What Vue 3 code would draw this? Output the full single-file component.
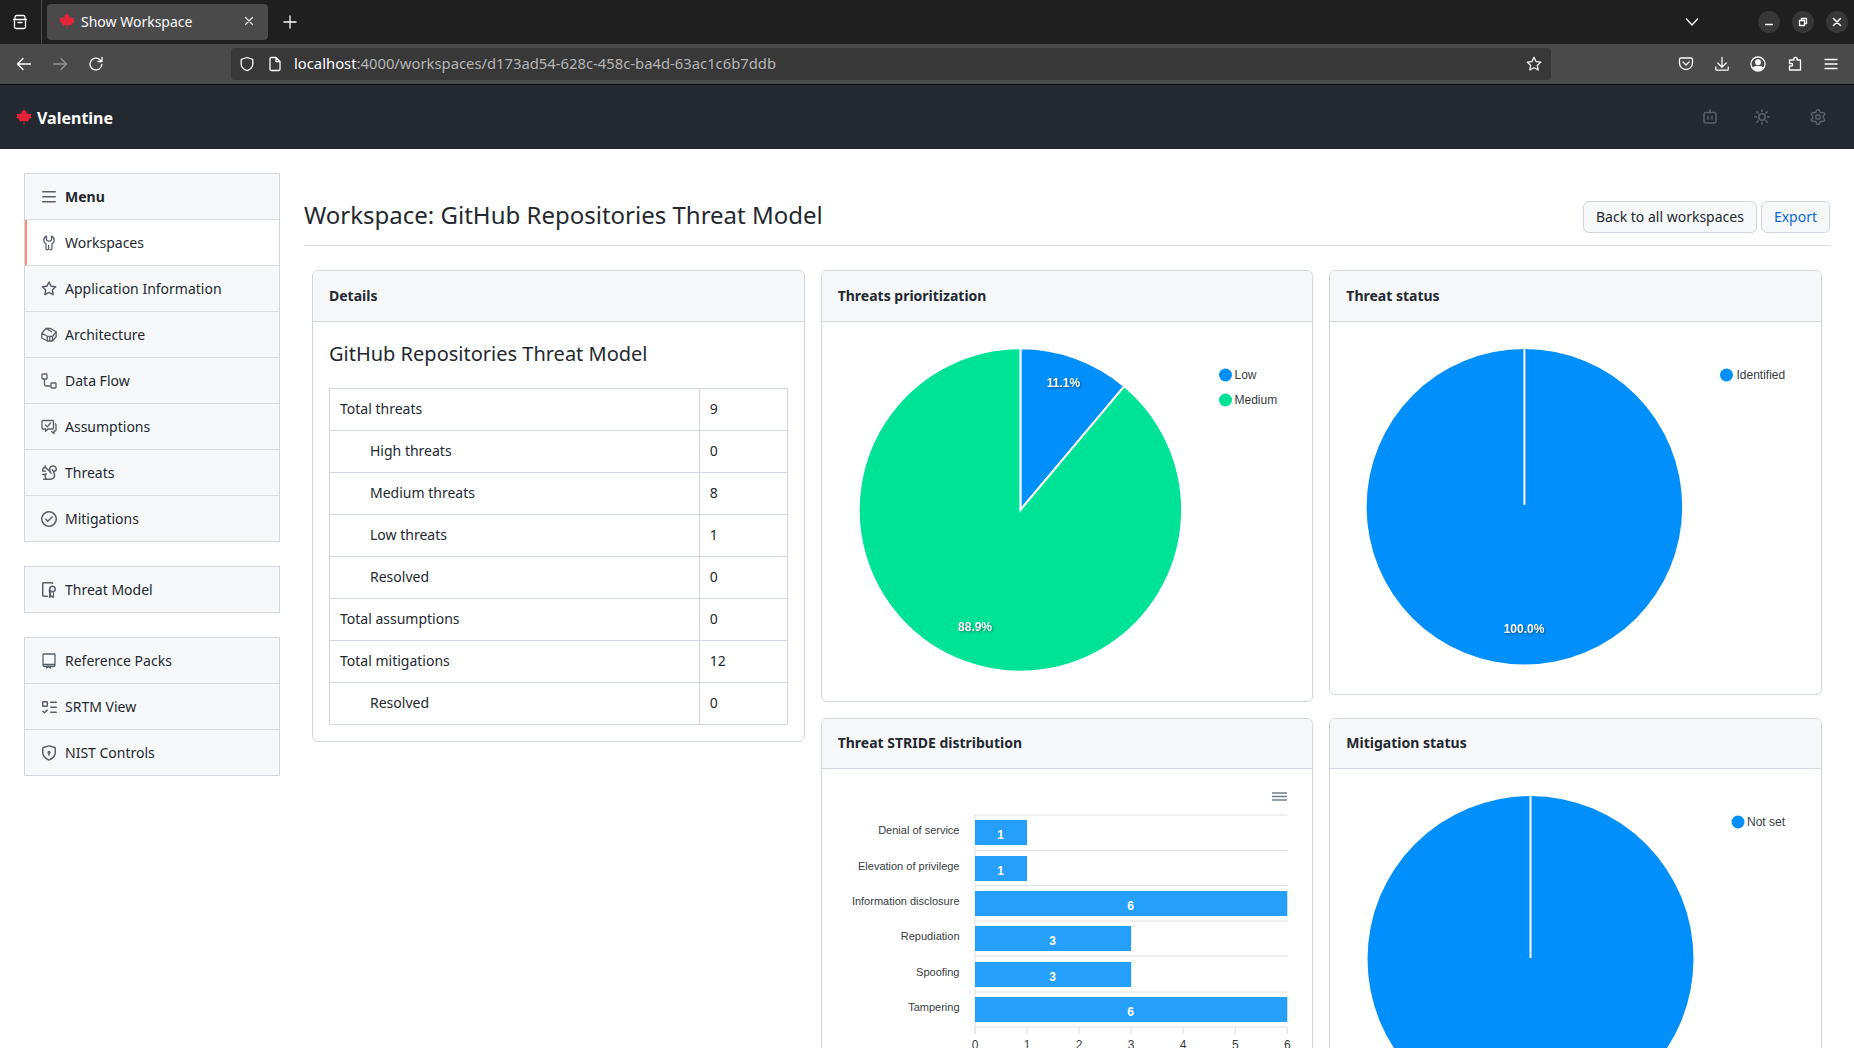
<template>
  <div class="page">
    <!-- browser chrome -->
    <div class="tabbar">
      <div class="tabside">
        <svg class="ff" width="16" height="16" viewBox="0 0 16 16"><path d="M2.5 5.5V13a1.5 1.5 0 0 0 1.5 1.5h8a1.5 1.5 0 0 0 1.5-1.5V5.5M1.5 5.5h13M3 5.5V3.2A1.7 1.7 0 0 1 4.7 1.5h6.6A1.7 1.7 0 0 1 13 3.2v2.3M6 8.5h4" /></svg>
      </div>
      <div class="tab">
        <svg class="leaf" width="16" height="16" viewBox="0 0 16 16"><path :d="leaf" /></svg>
        <span class="tabtitle">Show Workspace</span>
        <svg class="ff tabclose" width="12" height="12" viewBox="0 0 12 12"><path d="M2.5 2.5l7 7M9.5 2.5l-7 7" /></svg>
      </div>
      <svg class="ff newtab" width="16" height="16" viewBox="0 0 16 16"><path d="M8 2v12M2 8h12" /></svg>
      <svg class="ff chevron" width="16" height="16" viewBox="0 0 16 16"><path d="M2.5 5l5.5 6 5.5-6" /></svg>
      <div class="winbtns">
        <span class="winbtn"><svg class="ff" width="12" height="12" viewBox="0 0 12 12"><path d="M2.5 8.5h7" /></svg></span>
        <span class="winbtn"><svg class="ff" width="12" height="12" viewBox="0 0 12 12"><path d="M2.5 4.5h5v5h-5zM4.5 4.5v-2h5v5h-2" /></svg></span>
        <span class="winbtn"><svg class="ff" width="12" height="12" viewBox="0 0 12 12"><path d="M2.5 2.5l7 7M9.5 2.5l-7 7" stroke-width="1.5" /></svg></span>
      </div>
    </div>
    <div class="toolbar">
      <svg class="ff navbtn" width="16" height="16" viewBox="0 0 16 16"><path d="M14.5 8h-13M7 2.5L1.5 8 7 13.5" /></svg>
      <svg class="ff navbtn dim" width="16" height="16" viewBox="0 0 16 16"><path d="M1.5 8h13M9 2.5L14.5 8 9 13.5" /></svg>
      <svg class="ff navbtn" width="16" height="16" viewBox="0 0 16 16"><path d="M13.8 8.5A5.9 5.9 0 1 1 12 3.8L14 5.5M14 1.5v4h-4" /></svg>
      <div class="urlbar">
        <svg class="ff" width="16" height="16" viewBox="0 0 16 16"><path d="M8 1.5l5.8 1.8V8c0 3-2.3 5.4-5.8 6.7C4.5 13.4 2.2 11 2.2 8V3.3z" /></svg>
        <svg class="ff" width="16" height="16" viewBox="0 0 16 16"><path d="M3 2.8A1.3 1.3 0 0 1 4.3 1.5H9L13 5.5v7.7a1.3 1.3 0 0 1-1.3 1.3H4.3A1.3 1.3 0 0 1 3 13.2zM9 1.5v4h4" /></svg>
        <span class="url"><span class="host">localhost</span>:4000/workspaces/d173ad54-628c-458c-ba4d-63ac1c6b7ddb</span>
        <svg class="ff star" width="16" height="16" viewBox="0 0 16 16"><path d="M8 1.3l2 4.3 4.7.6-3.4 3.2.9 4.6L8 11.7 3.8 14l.9-4.6L1.3 6.2 6 5.6z" /></svg>
      </div>
      <div class="tools">
        <svg class="ff" width="16" height="16" viewBox="0 0 16 16"><path d="M2.8 2h10.4a1.3 1.3 0 0 1 1.3 1.3V7A6.5 6.5 0 0 1 1.5 7V3.3A1.3 1.3 0 0 1 2.8 2zM5 6l3 3 3-3" /></svg>
        <svg class="ff" width="16" height="16" viewBox="0 0 16 16"><path d="M8 1.5V11M3.8 7L8 11.2 12.2 7M1.8 11v2.2a1 1 0 0 0 1 1h10.4a1 1 0 0 0 1-1V11" /></svg>
        <svg class="ff" width="16" height="16" viewBox="0 0 16 16"><circle cx="8" cy="8" r="7" /><circle cx="8" cy="6.3" r="2.3" fill="#fbfbfe" /><path d="M3.5 11.8c1-1.5 8-1.5 9 0-1.2 1.5-2.8 2.2-4.5 2.2s-3.3-.7-4.5-2.2z" fill="#fbfbfe" /></svg>
        <svg class="ff" width="16" height="16" viewBox="0 0 16 16"><path d="M8.5 1.5c1.5 0 2 1 1.5 2.5h3.5v10H2.5v-4h2c1.5 0 1.5-2.5 0-2.5h-2V4H7c-.5-1.5 0-2.500 1.500-2.500z" /></svg>
        <svg class="ff" width="16" height="16" viewBox="0 0 16 16"><path d="M2 3.5h12M2 8h12M2 12.5h12" /></svg>
      </div>
    </div>

    <!-- app header -->
    <header class="appbar">
      <svg class="leaf" width="16" height="16" viewBox="0 0 16 16"><path :d="leaf" /></svg>
      <span class="brand">Valentine</span>
      <div class="appicons">
        <svg class="oct" width="16" height="16" viewBox="0 0 16 16"><path d="M8 3V.8M3.5 3.500h9a1.500 1.500 0 0 1 1.500 1.500v7.500a1.500 1.500 0 0 1-1.500 1.500h-9A1.500 1.500 0 0 1 2 12.500V5a1.500 1.500 0 0 1 1.500-1.500zM6 7.500v2.500M10 7.500v2.500" fill="none" stroke="#57606a" stroke-width="1.5" stroke-linecap="round" /></svg>
        <svg class="oct sun" width="16" height="16" viewBox="0 0 16 16"><circle cx="8" cy="8" r="3.2" fill="none" stroke="#57606a" stroke-width="1.5" /><path d="M8 .8v1.700M8 13.500v1.700M.8 8h1.700M13.500 8h1.700M2.900 2.900l1.200 1.200M11.900 11.900l1.200 1.200M2.900 13.100l1.200-1.200M11.900 4.100l1.200-1.200" stroke="#57606a" stroke-width="1.5" stroke-linecap="round" /></svg>
        <svg class="oct" width="16" height="16" viewBox="0 0 16 16"><path :d="icons.gear" fill="#57606a" fill-rule="evenodd" /></svg>
      </div>
    </header>

    <div class="layout">
      <aside class="sidebar">
        <nav class="menu" v-for="(group, i) in navGroups" :key="i">
          <a v-for="item in group" :key="item.label" class="menu-item" :class="{ head: item.head, active: item.active }">
            <svg class="oct" width="16" height="16" viewBox="0 0 16 16">
              <path v-if="item.fill" :d="item.fill" fill="#57606a" fill-rule="evenodd" />
              <path v-if="item.line" :d="item.line" fill="none" stroke="#57606a" stroke-width="1.3" stroke-linecap="round" stroke-linejoin="round" />
            </svg>
            <span>{{ item.label }}</span>
          </a>
        </nav>
      </aside>

      <main class="main">
        <div class="pagehead">
          <h1>Workspace: GitHub Repositories Threat Model</h1>
          <div class="actions">
            <button class="btn">Back to all workspaces</button>
            <button class="btn link">Export</button>
          </div>
        </div>

        <div class="grid">
          <section class="box details">
            <div class="box-head">Details</div>
            <div class="box-body">
              <h3>GitHub Repositories Threat Model</h3>
              <table>
                <tbody>
                  <tr v-for="row in stats" :key="row.label + row.value">
                    <td :class="{ sub: row.sub }">{{ row.label }}</td>
                    <td class="num">{{ row.value }}</td>
                  </tr>
                </tbody>
              </table>
            </div>
          </section>

          <section class="box">
            <div class="box-head">Threats prioritization</div>
            <svg class="chart" height="379">
              <path :d="slice(198.4, 188, 161.7, 40)" fill="#008ffb" stroke="#fff" stroke-width="2" />
              <path :d="slice(198.4, 188, 161.7, 360, 40)" fill="#00e396" stroke="#fff" stroke-width="2" />
              <text class="pct" x="241.5" y="65">11.1%</text>
              <text class="pct" x="153" y="309">88.9%</text>
              <circle cx="403.5" cy="53" r="6.5" fill="#008ffb" />
              <text class="legend" x="412.5" y="57">Low</text>
              <circle cx="403.5" cy="78" r="6.5" fill="#00e396" />
              <text class="legend" x="412.5" y="82">Medium</text>
            </svg>
          </section>

          <section class="box">
            <div class="box-head">Threat status</div>
            <svg class="chart" height="372">
              <circle cx="194.4" cy="184.8" r="157.8" fill="#008ffb" />
              <path d="M194.4 26V183" stroke="#fff" stroke-width="2" />
              <text class="pct" x="194" y="311">100.0%</text>
              <circle cx="396.5" cy="53" r="6.5" fill="#008ffb" />
              <text class="legend" x="406.5" y="57">Identified</text>
            </svg>
          </section>

          <section class="box second">
            <div class="box-head">Threat STRIDE distribution</div>
            <svg class="chart" height="340">
              <path d="M450 24h15M450 27.5h15M450 31h15" stroke="#6e8192" stroke-width="1.5" />
              <path v-for="y in gridY" :key="y" :d="`M153 ${y}H465.5`" stroke="#e0e0e0" />
              <path d="M153 46V265" stroke="#e0e0e0" />
              <path v-for="t in 7" :key="t" :d="`M${tickX(t - 1)} 258v7`" stroke="#e0e0e0" />
              <g v-for="bar in bars" :key="bar.label">
                <text class="axis" x="137.5" text-anchor="end" :y="bar.y + 14">{{ bar.label }}</text>
                <rect x="153" :y="bar.y" :width="bar.value * 52.05" height="25" fill="#269ffb" />
                <text class="barval" :x="152.5 + bar.value * 26.02" :y="bar.y + 19">{{ bar.value }}</text>
              </g>
              <text v-for="t in 7" :key="t" class="tick" :x="tickX(t - 1)" y="280">{{ t - 1 }}</text>
            </svg>
          </section>

          <section class="box second">
            <div class="box-head">Mitigation status</div>
            <svg class="chart" height="400">
              <circle cx="200.5" cy="190" r="163" fill="#008ffb" />
              <path d="M200.5 27V189" stroke="#fff" stroke-width="2" />
              <circle cx="408" cy="53" r="6.5" fill="#008ffb" />
              <text class="legend" x="417" y="57">Not set</text>
            </svg>
          </section>
        </div>
      </main>
    </div>
  </div>
</template>

<script setup>
const leaf = 'M8 0L9.5 2.8L10.8 2.1L10.2 5.6L12 3.8L12.5 5.2L15.5 4.8L14.6 7.6L15.8 8.3L12.2 11L12.7 12.4L8.4 12V16H7.6V12L3.3 12.4L3.8 11L.2 8.3L1.4 7.6L.5 4.8L3.5 5.2L4 3.8L5.8 5.6L5.2 2.1L6.5 2.8Z'

const icons = {
  gear: 'M8 0a8.2 8.2 0 0 1 .701.031C9.444.095 9.99.645 10.16 1.29l.288 1.107c.018.066.079.158.212.224.231.114.454.243.668.386.123.082.233.09.299.071l1.103-.303c.644-.176 1.392.021 1.82.63.27.385.506.792.704 1.218.315.675.111 1.422-.364 1.891l-.814.806c-.049.048-.098.147-.088.294.016.257.016.515 0 .772-.01.147.038.246.088.294l.814.806c.475.469.679 1.216.364 1.891a7.977 7.977 0 0 1-.704 1.217c-.428.61-1.176.807-1.82.63l-1.102-.302c-.067-.019-.177-.011-.3.071a5.909 5.909 0 0 1-.668.386c-.133.066-.194.158-.211.224l-.29 1.106c-.168.646-.715 1.196-1.458 1.26a8.006 8.006 0 0 1-1.402 0c-.743-.064-1.289-.614-1.458-1.26l-.289-1.106c-.018-.066-.079-.158-.212-.224a5.738 5.738 0 0 1-.668-.386c-.123-.082-.233-.09-.299-.071l-1.103.303c-.644.176-1.392-.021-1.82-.63a8.12 8.12 0 0 1-.704-1.218c-.315-.675-.111-1.422.363-1.891l.815-.806c.05-.048.098-.147.088-.294a6.214 6.214 0 0 1 0-.772c.01-.147-.038-.246-.088-.294l-.815-.806C.635 6.045.431 5.298.746 4.623a7.92 7.92 0 0 1 .704-1.217c.428-.61 1.176-.807 1.82-.63l1.102.302c.067.019.177.011.3-.071.214-.143.437-.272.668-.386.133-.066.194-.158.211-.224l.29-1.106C6.009.645 6.556.095 7.299.03 7.53.01 7.764 0 8 0Zm-.571 1.525c-.036.003-.108.036-.137.146l-.289 1.105c-.147.561-.549.967-.998 1.189-.173.086-.34.183-.5.29-.417.278-.97.423-1.529.27l-1.103-.303c-.109-.03-.175.016-.195.045-.22.312-.412.644-.573.99-.014.031-.021.11.059.19l.815.806c.411.406.562.957.53 1.456a4.709 4.709 0 0 0 0 .582c.032.499-.119 1.05-.53 1.456l-.815.806c-.081.08-.073.159-.059.19.162.346.353.677.573.989.02.03.085.076.195.046l1.102-.303c.56-.153 1.113-.008 1.53.27.161.107.328.204.501.29.447.222.85.629.997 1.189l.289 1.105c.029.109.101.143.137.146a6.6 6.6 0 0 0 1.142 0c.036-.003.108-.036.137-.146l.289-1.105c.147-.561.549-.967.998-1.189.173-.086.34-.183.5-.29.417-.278.97-.423 1.529-.27l1.103.303c.109.029.175-.016.195-.045.22-.313.411-.644.573-.99.014-.031.021-.11-.059-.19l-.815-.806c-.411-.406-.562-.957-.53-1.456a4.709 4.709 0 0 0 0-.582c-.032-.499.119-1.05.53-1.456l.815-.806c.081-.08.073-.159.059-.19a6.464 6.464 0 0 0-.573-.989c-.02-.03-.085-.076-.195-.046l-1.102.303c-.56.153-1.113.008-1.53-.27a4.44 4.44 0 0 0-.501-.29c-.447-.222-.85-.629-.997-1.189l-.289-1.105c-.029-.11-.101-.143-.137-.146a6.6 6.6 0 0 0-1.142 0ZM11 8a3 3 0 1 1-6 0 3 3 0 0 1 6 0ZM9.500 8a1.500 1.500 0 1 0-3.001.001A1.500 1.500 0 0 0 9.500 8Z'
}

const navGroups = [
  [
    { label: 'Menu', head: true, fill: 'M1 2.750A.75.75 0 0 1 1.750 2h12.500a.75.75 0 0 1 0 1.500H1.750A.75.75 0 0 1 1 2.750Zm0 5A.75.75 0 0 1 1.750 7h12.500a.75.75 0 0 1 0 1.500H1.750A.75.75 0 0 1 1 7.750ZM1.750 12h12.500a.75.75 0 0 1 0 1.500H1.750a.75.75 0 0 1 0-1.500Z' },
    { label: 'Workspaces', active: true, line: 'M5.500 1.200C3.800 2 2.800 3.400 2.800 5.200c0 1.500.8 2.700 2.200 3.300V13.500a1.300 1.300 0 0 0 2.600 0V10.500M10.500 1.200C12.200 2 13.200 3.400 13.200 5.200c0 1.500-.8 2.700-2.200 3.300V13.500a1.300 1.300 0 0 1-2 1M5.500 1.200V4.800c.6 1 1.500 1.400 2.500 1.400s1.900-.4 2.500-1.400V1.200' },
    { label: 'Application Information', fill: 'M8 .25a.75.75 0 0 1 .673.418l1.882 3.815 4.21.612a.75.75 0 0 1 .416 1.279l-3.046 2.97.719 4.192a.751.751 0 0 1-1.088.791L8 12.347l-3.766 1.98a.75.75 0 0 1-1.088-.79l.72-4.194L.818 6.374a.75.75 0 0 1 .416-1.28l4.21-.611L7.327.668A.75.75 0 0 1 8 .25Zm0 2.445L6.615 5.500a.75.75 0 0 1-.564.41l-3.097.45 2.240 2.184a.75.75 0 0 1 .216.664l-.528 3.084 2.769-1.456a.75.75 0 0 1 .698 0l2.770 1.456-.53-3.084a.75.75 0 0 1 .216-.664l2.240-2.183-3.096-.45a.75.75 0 0 1-.564-.41L8 2.694Z' },
    { label: 'Architecture', line: 'M.8 6.200L5 1.500h4.500L15.200 4.700v4.800L11.500 14H6.300L.8 11zM.8 6.200L6.300 9.300h5.200l3.700-4.600M6.300 9.300V14M8.800 9.300V14M11.500 9.300V14M5 1.500l5.500 3.200' },
    { label: 'Data Flow', line: 'M1.700 1h3.600a.7.7 0 0 1 .7.7v3.600a.7.7 0 0 1-.7.7H1.700a.7.7 0 0 1-.7-.7V1.700a.7.7 0 0 1 .7-.7zM10.700 10h3.600a.7.7 0 0 1 .7.7v3.600a.7.7 0 0 1-.7.7h-3.600a.7.7 0 0 1-.7-.7v-3.600a.7.7 0 0 1 .7-.7zM3.500 6v5.500a1.500 1.500 0 0 0 1.500 1.500h5' },
    { label: 'Assumptions', line: 'M2 1.500h9.500A1 1 0 0 1 12.500 2.500v6.500a1 1 0 0 1-1 1H7l-2.500 2.300V10H2a1 1 0 0 1-1-1V2.500a1 1 0 0 1 1-1zM4.500 6l1.800 1.800L9.500 4M14.300 4.800c.4.200.7.600.7 1V11a1 1 0 0 1-1 1h-1v2.500L10.500 12.500' },
    { label: 'Threats', fill: 'M3.499.75a.75.75 0 0 1 1.5 0v.996C5.9 2.903 6.793 3.65 7.662 4.376l.24.202c-.036-.694.055-1.422.426-2.163C9.100.873 10.794-.045 12.622.26 14.408.558 16 1.940 16 4.250c0 1.278-.954 2.575-2.440 2.734l.146.508.065.22c.203.701.412 1.455.476 2.226.142 1.707-.4 3.030-1.487 3.898C11.714 14.671 10.270 15 8.750 15h-6a.75.75 0 0 1 0-1.500h1.376a4.484 4.484 0 0 1-.563-1.191 3.835 3.835 0 0 1-.05-2.063 4.647 4.647 0 0 1-2.025-.293.75.75 0 0 1 .525-1.406c1.357.507 2.376-.006 2.698-.318l.009-.01a.747.747 0 0 1 1.060 0 .748.748 0 0 1-.012 1.074c-.912.92-.992 1.835-.768 2.586.221.74.745 1.337 1.196 1.621H8.750c1.343 0 2.398-.296 3.074-.836.635-.507 1.036-1.310.928-2.602-.05-.603-.216-1.224-.422-1.930l-.064-.221c-.12-.407-.246-.84-.353-1.290a2.425 2.425 0 0 1-.507-.441 3.075 3.075 0 0 1-.633-1.248.75.75 0 0 1 1.455-.364c.046.185.144.436.31.627.146.168.353.305.712.305.738 0 1.250-.615 1.250-1.250 0-1.470-.95-2.315-2.123-2.510-1.172-.196-2.227.387-2.706 1.345-.46.92-.27 1.774.019 3.062l.042.19a.753.753 0 0 1 .01.05c.348.443.666.949.94 1.553a.75.75 0 1 1-1.365.62c-.553-1.217-1.320-1.940-2.300-2.768L6.700 5.527c-.814-.68-1.750-1.462-2.692-2.619a3.737 3.737 0 0 0-1.023.88c-.406.495-.663 1.036-.722 1.508.116.122.306.21.591.239.388.038.797-.06 1.032-.19a.75.75 0 0 1 .728 1.310c-.515.287-1.230.439-1.906.373-.682-.067-1.473-.38-1.879-1.193L.75 5.677V5.500c0-.984.48-1.940 1.077-2.664.46-.559 1.050-1.055 1.673-1.353V.75Z' },
    { label: 'Mitigations', fill: 'M0 8a8 8 0 1 1 16 0A8 8 0 0 1 0 8Zm1.500 0a6.500 6.500 0 1 0 13 0 6.500 6.500 0 0 0-13 0Zm10.280-1.720-4.500 4.500a.75.75 0 0 1-1.060 0l-2-2a.751.751 0 0 1 .018-1.042.751.751 0 0 1 1.042-.018l1.470 1.470 3.970-3.970a.751.751 0 0 1 1.042.018.751.751 0 0 1 .018 1.042Z' }
  ],
  [
    { label: 'Threat Model', fill: 'M2.750 1.500a.25.25 0 0 0-.25.25v11.500c0 .138.112.25.25.25h3.500a.75.75 0 0 1 0 1.500h-3.500A1.750 1.750 0 0 1 1 13.250V1.750C1 .784 1.784 0 2.750 0h8a1.750 1.750 0 0 1 1.508.862.75.75 0 1 1-1.289.768.25.25 0 0 0-.219-.13h-8ZM8 7a3.500 3.500 0 1 1 5 3.163V15.250a.75.75 0 0 1-1.200.6l-1.300-.975-1.300.975a.75.75 0 0 1-1.200-.6v-5.087A3.500 3.500 0 0 1 8 7Zm3.500-2a2 2 0 1 0 0 4 2 2 0 0 0 0-4ZM10 10.500v3.250l.55-.412a.75.75 0 0 1 .9 0l.55.412V10.500c-.48.157-1.020.157-1.500 0Z' },
  ],
  [
    { label: 'Reference Packs', line: 'M4.500 13.500H3.500A1.500 1.500 0 0 1 2 12V1.700A.7.7 0 0 1 2.700 1h10.600a.7.7 0 0 1 .7.7V12a1.500 1.500 0 0 1-1.500 1.500H10.500M2 11.500h12', fill: 'M5 12.500h5v3a.25.25 0 0 1-.4.2L7.500 14.500 5.400 15.700a.25.25 0 0 1-.4-.2z' },
    { label: 'SRTM View', fill: 'M2 2h4a1 1 0 0 1 1 1v4a1 1 0 0 1-1 1H2a1 1 0 0 1-1-1V3a1 1 0 0 1 1-1Zm4.655 8.595a.75.75 0 0 1 0 1.060L4.030 14.280a.75.75 0 0 1-1.060 0l-1.500-1.500a.749.749 0 0 1 .326-1.275.749.749 0 0 1 .734.215l.97.97 2.095-2.095a.75.75 0 0 1 1.060 0ZM9.750 2.500h5.500a.75.75 0 0 1 0 1.500h-5.500a.75.75 0 0 1 0-1.500Zm0 5h5.500a.75.75 0 0 1 0 1.500h-5.500a.75.75 0 0 1 0-1.500Zm0 5h5.500a.75.75 0 0 1 0 1.500h-5.500a.75.75 0 0 1 0-1.500Zm-7.250-9v3h3v-3Z' },
    { label: 'NIST Controls', fill: 'M7.467.133a1.748 1.748 0 0 1 1.066 0l5.250 1.680A1.750 1.750 0 0 1 15 3.480V7c0 1.566-.32 3.182-1.303 4.682-.983 1.498-2.585 2.813-5.032 3.855a1.697 1.697 0 0 1-1.330 0c-2.447-1.042-4.049-2.357-5.032-3.855C1.320 10.182 1 8.566 1 7V3.480a1.750 1.750 0 0 1 1.217-1.667Zm.61 1.429a.25.25 0 0 0-.153 0l-5.250 1.680a.25.25 0 0 0-.174.238V7c0 1.358.275 2.666 1.057 3.860.784 1.194 2.121 2.340 4.366 3.297a.196.196 0 0 0 .154 0c2.245-.956 3.582-2.104 4.366-3.298C13.225 9.666 13.500 8.360 13.500 7V3.480a.251.251 0 0 0-.174-.237l-5.250-1.680ZM8.750 8.582v1.668a.75.75 0 0 1-1.500 0V8.582a1.500 1.500 0 1 1 1.500 0Z' }
  ]
]

const stats = [
  { label: 'Total threats', value: 9 },
  { label: 'High threats', value: 0, sub: true },
  { label: 'Medium threats', value: 8, sub: true },
  { label: 'Low threats', value: 1, sub: true },
  { label: 'Resolved', value: 0, sub: true },
  { label: 'Total assumptions', value: 0 },
  { label: 'Total mitigations', value: 12 },
  { label: 'Resolved', value: 0, sub: true }
]

const gridY = [46, 81.5, 116.5, 152, 187, 223, 258]
const bars = [
  { label: 'Denial of service', value: 1, y: 51 },
  { label: 'Elevation of privilege', value: 1, y: 87 },
  { label: 'Information disclosure', value: 6, y: 122 },
  { label: 'Repudiation', value: 3, y: 157 },
  { label: 'Spoofing', value: 3, y: 193 },
  { label: 'Tampering', value: 6, y: 228 }
]

function tickX(n) {
  return 153 + n * 52.05
}

// pie wedge clockwise from the top, angles in degrees
function slice(cx, cy, r, to, from = 0) {
  const point = (deg) => {
    const a = (deg * Math.PI) / 180
    return `${cx + r * Math.sin(a)} ${cy - r * Math.cos(a)}`
  }
  const large = to - from > 180 ? 1 : 0
  return `M${cx} ${cy}L${point(from)}A${r} ${r} 0 ${large} 1 ${point(to)}Z`
}
</script>

<style>
html, body {
  margin: 0;
  height: 1048px;
  overflow: hidden;
  background: #fff;
}
</style>

<style scoped>
.page {
  width: 1854px;
  height: 1048px;
  overflow: hidden;
  font-family: "Noto Sans", "Liberation Sans", sans-serif;
  font-size: 14px;
  line-height: 21px;
  color: #24292f;
}

.ff {
  fill: none;
  stroke: #fbfbfe;
  stroke-width: 1.3;
  stroke-linecap: round;
  stroke-linejoin: round;
  flex: none;
}
.leaf {
  fill: #e5243b;
  flex: none;
}

.tabbar {
  height: 44px;
  background: #1f1f1f;
  display: flex;
  align-items: center;
}
.tabside {
  width: 42px;
  height: 44px;
  border-right: 1px solid #4a4a4a;
  box-sizing: border-box;
  display: flex;
  align-items: center;
  padding-left: 12px;
}
.tab {
  margin-left: 5px;
  width: 221px;
  height: 36px;
  box-sizing: border-box;
  padding: 0 12px 2px;
  background: #4a4a4a;
  border-radius: 4px;
  display: flex;
  align-items: center;
  color: #fbfbfe;
}
.tabtitle {
  margin-left: 6px;
  font-size: 14px;
  flex: 1;
}
.tabclose {
  margin-right: 1px;
  stroke: #e8e8e8;
}
.newtab {
  margin-left: 14px;
}
.chevron {
  margin-left: auto;
  margin-right: 58px;
}
.winbtns {
  display: flex;
  gap: 12px;
  margin-right: 6px;
}
.winbtn {
  width: 22px;
  height: 22px;
  border-radius: 50%;
  background: #373737;
  display: flex;
  align-items: center;
  justify-content: center;
}

.toolbar {
  height: 40px;
  background: #4a4a4a;
  border-bottom: 1px solid #0c0c0c;
  display: flex;
  align-items: center;
  padding-left: 16px;
}
.navbtn {
  margin-right: 20px;
}
.navbtn.dim {
  opacity: 0.4;
}
.urlbar {
  margin-left: 107px;
  width: 1320px;
  height: 32px;
  box-sizing: border-box;
  background: #383838;
  border-radius: 4px;
  display: flex;
  align-items: center;
  gap: 12px;
  padding: 0 9px 0 8px;
  color: #b4b4b4;
}
.url {
  font-size: 14.8px;
  flex: 1;
  margin-left: -1px;
  padding-bottom: 2px;
  white-space: nowrap;
}
.host {
  color: #fbfbfe;
}
.tools {
  display: flex;
  align-items: center;
  gap: 20.2px;
  margin-left: 127px;
}

.appbar {
  height: 64px;
  background: #24292f;
  display: flex;
  align-items: center;
  padding-left: 16px;
}
.brand {
  margin-left: 5px;
  padding-top: 2px;
  color: #fff;
  font-weight: 700;
  font-size: 16px;
}
.appicons {
  margin-left: auto;
  display: flex;
  padding-right: 28px;
  margin-bottom: 1px;
}
.sun {
  margin: 0 40px 0 36px;
}

.layout {
  display: flex;
  padding: 24px 24px 0;
  gap: 24px;
}
.sidebar {
  width: 256px;
  flex: none;
  display: flex;
  flex-direction: column;
  gap: 24px;
}
.menu {
  border: 1px solid #d0d7de;
  background: #f6f8fa;
  display: flex;
  flex-direction: column;
}
.menu-item {
  height: 46px;
  box-sizing: border-box;
  display: flex;
  align-items: center;
  gap: 8px;
  padding-left: 16px;
  border-bottom: 1px solid #d8dee4;
}
.menu-item:last-child {
  border-bottom: none;
  height: 45px;
}
.menu-item .oct {
  flex: none;
}
.menu-item.head {
  font-weight: 700;
}
.menu-item.active {
  background: #fff;
  box-shadow: inset 2px 0 0 #fd8c73;
}

.main {
  flex: 1;
  min-width: 0;
  padding-top: 28px;
}
.pagehead {
  display: flex;
  align-items: flex-start;
  justify-content: space-between;
  padding-bottom: 12px;
  border-bottom: 1px solid #d8dee4;
}
h1 {
  margin: 0;
  font-size: 24px;
  font-weight: 400;
  line-height: 28px;
}
.actions {
  display: flex;
  gap: 4px;
}
.btn {
  height: 32px;
  padding: 0 12px 2px;
  font: inherit;
  color: #24292f;
  background: #f6f8fa;
  border: 1px solid #d0d7de;
  border-radius: 6px;
}
.btn.link {
  color: #0969da;
}

.grid {
  display: grid;
  grid-template-columns: repeat(3, 1fr);
  gap: 16px;
  padding: 24px 8px 0;
  align-items: start;
}
.details {
  grid-row: span 2;
}
.box {
  border: 1px solid #d0d7de;
  border-radius: 6px;
  overflow: hidden;
  background: #fff;
}
.box-head {
  height: 51px;
  box-sizing: border-box;
  padding: 0 16px 2px;
  display: flex;
  align-items: center;
  font-weight: 700;
  background: #f6f8fa;
  border-bottom: 1px solid #d0d7de;
}
.second .box-head {
  height: 50px;
}
.box-body {
  padding: 16px;
}
h3 {
  margin: 0 0 19px;
  padding-top: 1px;
  font-size: 20px;
  font-weight: 400;
  line-height: 30px;
}
table {
  width: 100%;
  border-collapse: collapse;
}
td {
  border: 1px solid #d0d7de;
  padding: 9px 10px 11px;
}
td.sub {
  padding-left: 40px;
}
td.num {
  width: 67px;
}

.chart {
  display: block;
  width: 100%;
}
.pct {
  font: 700 12px "Liberation Sans", sans-serif;
  fill: #fff;
  text-anchor: middle;
  filter: drop-shadow(1px 1px 1px rgba(0, 0, 0, 0.45));
}
.legend {
  font: 12px "Liberation Sans", sans-serif;
  fill: #373d3f;
}
.axis {
  font: 11px "Liberation Sans", sans-serif;
  fill: #373d3f;
}
.barval {
  font: 700 12px "Liberation Sans", sans-serif;
  fill: #fff;
  text-anchor: middle;
}
.tick {
  font: 12px "Liberation Sans", sans-serif;
  fill: #373d3f;
  text-anchor: middle;
}
</style>
